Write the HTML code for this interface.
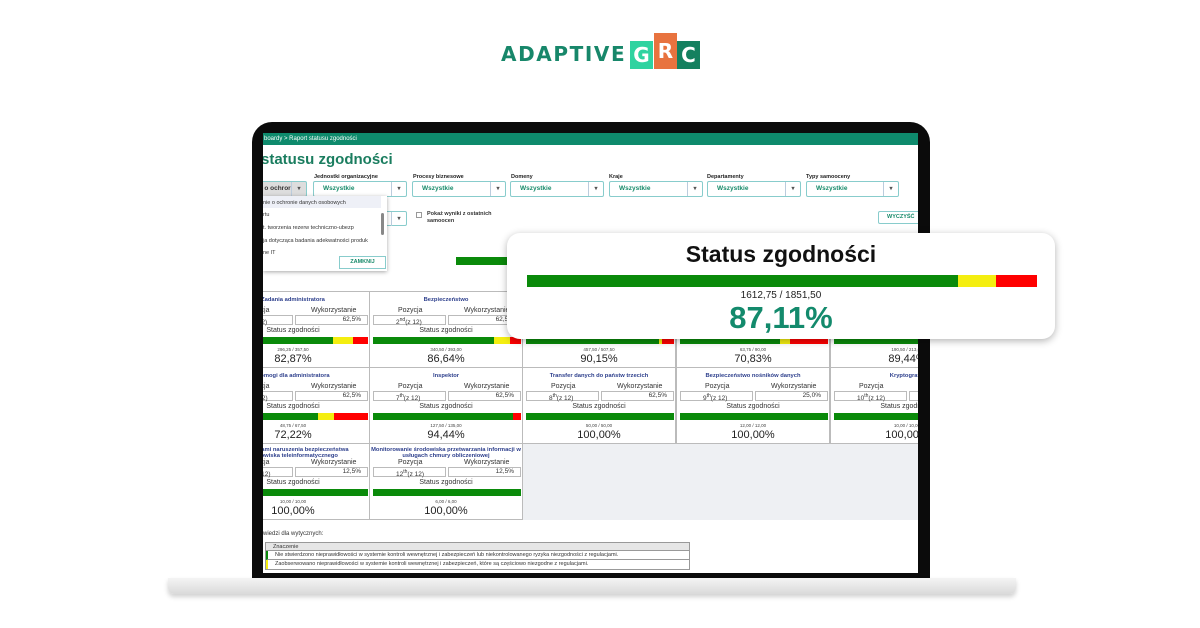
<!DOCTYPE html>
<html><head><meta charset="utf-8"><style>
*{margin:0;padding:0;box-sizing:border-box}
body{width:1200px;height:628px;background:#fff;position:relative;overflow:hidden;font-family:"Liberation Sans",sans-serif}
.a{position:absolute}
#logo{left:501px;top:42px;font:bold 20px "DejaVu Sans",sans-serif;color:#17876a;letter-spacing:1.6px}
.lb{position:absolute;color:#fff;font:bold 20px "DejaVu Sans",sans-serif;text-align:center;line-height:28px}
#lap{left:252px;top:122px;width:678px;height:458px;background:#0b0b0b;border-radius:20px 20px 0 0}
#base{left:168px;top:578px;width:848px;height:16px;background:linear-gradient(#f4f4f4,#dadada);border-radius:0 0 6px 6px;box-shadow:0 3px 5px rgba(0,0,0,.18)}
#scr{left:263px;top:133px;width:655px;height:440px;background:#fff;overflow:hidden}
#hdr{left:0;top:0;width:655px;height:12px;background:#0e8a6c;color:#fff;font-size:6px;line-height:12px;padding-left:1px}
#ttl{left:-2px;top:18px;font:bold 15px "Liberation Sans",sans-serif;color:#1a7d5f}
.fl{position:absolute;top:41px;font:bold 5.5px "Liberation Sans",sans-serif;color:#222}
.sel{position:absolute;top:48px;height:16px;border:1px solid #8cc;border-radius:2px;background:#fff;font:bold 6.5px "Liberation Sans",sans-serif;color:#178a6a;line-height:14px;padding-left:9px}
.sel:after{content:"▾";position:absolute;right:0;top:0;width:14px;height:14px;border-left:1px solid #bcd;text-align:center;color:#555;font-size:6px}
.c{position:absolute;width:154px;height:77px;border:1px solid #bbb;background:#fff;font-family:"Liberation Sans",sans-serif}
.c .t{position:absolute;left:0;right:0;top:5px;text-align:center;font:bold 5.8px/6px "Liberation Sans",sans-serif;color:#2d3f8c}
.c .l1,.c .l2{position:absolute;top:15px;font-size:7px;color:#333}
.c .l1{left:28px}.c .l2{left:94px}
.c .b1,.c .b2{position:absolute;top:23px;height:10px;border:1px solid #bbb;font-size:6.5px;line-height:8px;color:#333}
.c .b1{left:3px;width:73px;padding-left:22px}.c .b2{left:78px;width:73px;text-align:right;padding-right:6px}
.c .s{position:absolute;left:0;right:0;top:35px;text-align:center;font-size:7px;color:#333}
.c .bar{position:absolute;left:3px;width:148px;top:45px;height:7px;display:flex}
.c .bar i{display:block;height:7px}
.c .r{position:absolute;left:0;right:0;top:55px;text-align:center;font-size:4.5px;color:#444}
.c .p{position:absolute;left:0;right:0;top:61px;text-align:center;font-size:11px;color:#222}
sup{font-size:5px}
.g{background:#0a8a0a}.y{background:#f4ee10}.rd{background:#f00}
#card{left:507px;top:233px;width:548px;height:106px;background:#fff;border-radius:13px;box-shadow:0 2px 8px rgba(0,0,0,.3)}
</style></head><body>
<div class="a" id="logo">ADAPTIVE</div>
<div class="lb" style="left:630px;top:41px;width:23px;height:28px;background:#2fd3a0">G</div>
<div class="lb" style="left:654px;top:33px;width:23px;height:36px;background:#e8733f;line-height:36px">R</div>
<div class="lb" style="left:677px;top:41px;width:23px;height:28px;background:#14805f">C</div>

<div class="a" id="lap"></div>
<div class="a" id="base"></div>
<div class="a" id="scr">
 <div class="a" id="hdr">boardy &gt; Raport statusu zgodności</div>
 <div class="a" id="ttl">statusu zgodności</div>
 <div class="fl" style="left:51px">Jednostki organizacyjne</div>
 <div class="fl" style="left:150px">Procesy biznesowe</div>
 <div class="fl" style="left:248px">Domeny</div>
 <div class="fl" style="left:346px">Kraje</div>
 <div class="fl" style="left:444px">Departamenty</div>
 <div class="fl" style="left:543px">Typy samooceny</div>
 <div class="sel" style="left:-6px;width:50px;color:#333;background:#ddd;padding-left:2px">r o ochror</div>
 <div class="sel" style="left:50px;width:94px">Wszystkie</div>
 <div class="sel" style="left:149px;width:94px">Wszystkie</div>
 <div class="sel" style="left:247px;width:94px">Wszystkie</div>
 <div class="sel" style="left:346px;width:94px">Wszystkie</div>
 <div class="sel" style="left:444px;width:94px">Wszystkie</div>
 <div class="sel" style="left:543px;width:93px">Wszystkie</div>
 <div class="sel" style="left:120px;top:78px;width:24px;height:15px"></div>
 <div class="a" style="left:153px;top:79px;width:6px;height:6px;border:1px solid #999"></div>
 <div class="a" style="left:164px;top:78px;font:bold 5.5px/7px 'Liberation Sans',sans-serif;color:#333">Pokaż wyniki z ostatnich<br>samoocen</div>
 <div class="a" style="left:615px;top:78px;width:42px;height:13px;border:1px solid #8cc;border-radius:2px;font:bold 5.5px/11px 'Liberation Sans',sans-serif;color:#178a6a;padding-left:8px">WYCZYŚĆ</div>
 <div class="a" style="left:0;top:63px;width:124px;height:75px;background:#fff;box-shadow:0 1px 4px rgba(0,0,0,.35);font-size:5.5px;color:#333">
  <div class="a" style="left:0;top:0;width:118px;height:12px;background:#eef0f7"></div>
  <div class="a" style="left:0;top:4px">nie o ochronie danych osobowych</div>
  <div class="a" style="left:0;top:16px">rtu</div>
  <div class="a" style="left:0;top:29px">t. tworzenia rezerw techniczno-ubezp</div>
  <div class="a" style="left:0;top:42px">ja dotycząca badania adekwatności produk</div>
  <div class="a" style="left:0;top:54px">ne IT</div>
  <div class="a" style="left:118px;top:17px;width:3px;height:22px;background:#888;border-radius:2px"></div>
  <div class="a" style="left:76px;top:60px;width:47px;height:13px;border:1px solid #8cc;font:bold 5.5px/11px 'Liberation Sans',sans-serif;color:#178a6a;text-align:center">ZAMKNIJ</div>
 </div>
 <div class="a g" style="left:193px;top:124px;width:60px;height:8px"></div>

 <div class="a" style="left:260px;top:310px;width:400px;height:77px;background:#eef0f3"></div>
 <div class="c" style="left:-47px;top:158px"><div class="t">Zadania administratora</div><div class="l1">Pozycja</div><div class="l2">Wykorzystanie</div><div class="b1">1<sup>st</sup>(z 12)</div><div class="b2">62,5%</div><div class="s">Status zgodności</div><div class="bar"><i class="g" style="width:113px"></i><i class="y" style="width:20px"></i><i class="rd" style="width:15px"></i></div><div class="r">296,25 / 357,50</div><div class="p">82,87%</div></div>
 <div class="c" style="left:106px;top:158px"><div class="t">Bezpieczeństwo</div><div class="l1">Pozycja</div><div class="l2">Wykorzystanie</div><div class="b1">2<sup>nd</sup>(z 12)</div><div class="b2">62,5%</div><div class="s">Status zgodności</div><div class="bar"><i class="g" style="width:121px"></i><i class="y" style="width:16px"></i><i class="rd" style="width:11px"></i></div><div class="r">340,50 / 393,00</div><div class="p">86,64%</div></div>
 <div class="c" style="left:259px;top:158px"><div class="bar"><i class="g" style="width:133px"></i><i class="y" style="width:3px"></i><i class="rd" style="width:12px"></i></div><div class="r">457,50 / 507,50</div><div class="p">90,15%</div></div>
 <div class="c" style="left:413px;top:158px"><div class="bar"><i class="g" style="width:100px"></i><i class="y" style="width:10px"></i><i class="rd" style="width:38px"></i></div><div class="r">63,75 / 90,00</div><div class="p">70,83%</div></div>
 <div class="c" style="left:567px;top:158px"><div class="bar"><i class="g" style="width:133px"></i><i class="y" style="width:5px"></i><i class="rd" style="width:10px"></i></div><div class="r">190,50 / 213,00</div><div class="p">89,44%</div></div>
 <div class="c" style="left:-47px;top:234px"><div class="t">Pomogi dla administratora</div><div class="l1">Pozycja</div><div class="l2">Wykorzystanie</div><div class="b1">3<sup>rd</sup>(z 12)</div><div class="b2">62,5%</div><div class="s">Status zgodności</div><div class="bar"><i class="g" style="width:98px"></i><i class="y" style="width:16px"></i><i class="rd" style="width:34px"></i></div><div class="r">48,75 / 67,50</div><div class="p">72,22%</div></div>
 <div class="c" style="left:106px;top:234px"><div class="t">Inspektor</div><div class="l1">Pozycja</div><div class="l2">Wykorzystanie</div><div class="b1">7<sup>th</sup>(z 12)</div><div class="b2">62,5%</div><div class="s">Status zgodności</div><div class="bar"><i class="g" style="width:140px"></i><i class="rd" style="width:8px"></i></div><div class="r">127,50 / 135,00</div><div class="p">94,44%</div></div>
 <div class="c" style="left:259px;top:234px"><div class="t">Transfer danych do państw trzecich</div><div class="l1">Pozycja</div><div class="l2">Wykorzystanie</div><div class="b1">8<sup>th</sup>(z 12)</div><div class="b2">62,5%</div><div class="s">Status zgodności</div><div class="bar"><i class="g" style="width:148px"></i></div><div class="r">50,00 / 50,00</div><div class="p">100,00%</div></div>
 <div class="c" style="left:413px;top:234px"><div class="t">Bezpieczeństwo nośników danych</div><div class="l1">Pozycja</div><div class="l2">Wykorzystanie</div><div class="b1">9<sup>th</sup>(z 12)</div><div class="b2">25,0%</div><div class="s">Status zgodności</div><div class="bar"><i class="g" style="width:148px"></i></div><div class="r">12,00 / 12,00</div><div class="p">100,00%</div></div>
 <div class="c" style="left:567px;top:234px"><div class="t">Kryptografia</div><div class="l1">Pozycja</div><div class="l2">Wykorzystanie</div><div class="b1">10<sup>th</sup>(z 12)</div><div class="b2">62,5%</div><div class="s">Status zgodności</div><div class="bar"><i class="g" style="width:148px"></i></div><div class="r">10,00 / 10,00</div><div class="p">100,00%</div></div>
 <div class="c" style="left:-47px;top:310px"><div class="t" style="top:3px">Incydentami naruszenia bezpieczeństwa<br>środowiska teleinformatycznego</div><div class="l1">Pozycja</div><div class="l2">Wykorzystanie</div><div class="b1">11<sup>th</sup>(z 12)</div><div class="b2">12,5%</div><div class="s">Status zgodności</div><div class="bar"><i class="g" style="width:148px"></i></div><div class="r">10,00 / 10,00</div><div class="p">100,00%</div></div>
 <div class="c" style="left:106px;top:310px"><div class="t" style="top:3px">Monitorowanie środowiska przetwarzania informacji w<br>usługach chmury obliczeniowej</div><div class="l1">Pozycja</div><div class="l2">Wykorzystanie</div><div class="b1">12<sup>th</sup>(z 12)</div><div class="b2">12,5%</div><div class="s">Status zgodności</div><div class="bar"><i class="g" style="width:148px"></i></div><div class="r">6,00 / 6,00</div><div class="p">100,00%</div></div>

 <div class="a" style="left:0;top:398px;font-size:6px;color:#333">wiedzi dla wytycznych:</div>
 <div class="a" style="left:2px;top:409px;width:425px;height:28px;border:1px solid #999;font-size:5.5px;color:#333">
  <div style="height:8px;background:#e6e6e6;border-bottom:1px solid #999;padding-left:7px;line-height:8px">Znaczenie</div>
  <div style="height:9px;border-bottom:1px solid #999;padding-left:7px;line-height:9px;border-left:2px solid #0a8a0a">Nie stwierdzono nieprawidłowości w systemie kontroli wewnętrznej i zabezpieczeń lub niekontrolowanego ryzyka niezgodności z regulacjami.</div>
  <div style="height:9px;padding-left:7px;line-height:9px;border-left:2px solid #f4ee10">Zaobserwowano nieprawidłowości w systemie kontroli wewnętrznej i zabezpieczeń, które są częściowo niezgodne z regulacjami.</div>
 </div>
</div>

<div class="a" id="card">
 <div class="a" style="left:0;right:0;top:8px;text-align:center;font:bold 23px 'Liberation Sans',sans-serif;color:#111">Status zgodności</div>
 <div class="a" style="left:20px;top:42px;width:510px;height:12px;display:flex"><i class="g" style="width:431px"></i><i class="y" style="width:38px"></i><i class="rd" style="width:41px"></i></div>
 <div class="a" style="left:0;right:0;top:57px;text-align:center;font-size:10px;color:#222">1612,75 / 1851,50</div>
 <div class="a" style="left:0;right:0;top:67px;text-align:center;font:bold 31px 'Liberation Sans',sans-serif;color:#138a6c">87,11%</div>
</div>
</body></html>
